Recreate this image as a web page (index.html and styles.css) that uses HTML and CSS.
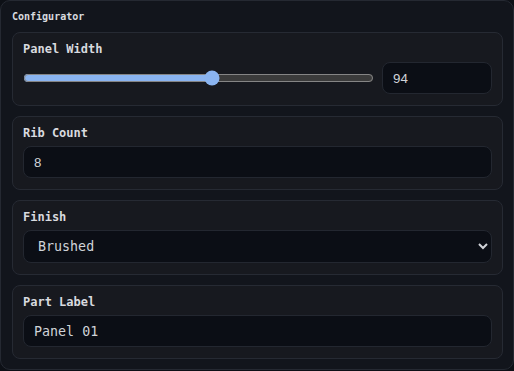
FILE: index.html
```html
<!DOCTYPE html>
<html lang="en">
<head>
<meta charset="utf-8">
<title>Configurator</title>
<link rel="stylesheet" href="styles.css">
</head>
<body>
<div class="panel">
  <div class="title">Configurator</div>
  <div class="card">
    <label class="label" for="w">Panel Width</label>
    <div class="row">
      <input id="w" class="range" type="range" min="40" max="140" value="94">
      <input class="field num small" type="number" value="94">
    </div>
  </div>
  <div class="card">
    <label class="label" for="r">Rib Count</label>
    <input id="r" class="field num" type="number" value="8">
  </div>
  <div class="card">
    <label class="label" for="f">Finish</label>
    <select id="f" class="field sel">
      <option>Brushed</option>
      <option>Polished</option>
      <option>Matte</option>
    </select>
  </div>
  <div class="card">
    <label class="label" for="p">Part Label</label>
    <input id="p" class="field" type="text" value="Panel 01">
  </div>
</div>
</body>
</html>
```
FILE: styles.css
```css
html, body {
  margin: 0;
  padding: 0;
  background: #0d1016;
  color-scheme: dark;
}
body {
  font-family: "DejaVu Sans Mono", monospace;
  color: #d6d8dc;
}
.panel {
  box-sizing: border-box;
  width: 514px;
  background: #12151c;
  border: 1px solid #252932;
  border-radius: 10px;
  padding: 10px 10px 10px 11px;
  display: flex;
  flex-direction: column;
  gap: 10px;
}
.title {
  font-size: 10px;
  font-weight: bold;
  line-height: 11px;
  color: #d8dadf;
}
.card {
  background: #17191f;
  border: 1px solid #262a33;
  border-radius: 8px;
  padding: 10px 10px 11px;
  display: flex;
  flex-direction: column;
  gap: 6px;
}
.label {
  font-size: 12px;
  font-weight: bold;
  line-height: 13px;
  color: #d8dadf;
}
.row {
  display: flex;
  align-items: center;
  gap: 8px;
}
.range {
  flex: 1;
  margin: 0;
  accent-color: #8ab4f0;
  height: 16px;
}
.field {
  box-sizing: border-box;
  height: 32px;
  background: #0b0e15;
  border: 1px solid #232730;
  border-radius: 8px;
  color: #d0d3d8;
  font-family: "DejaVu Sans Mono", monospace;
  font-size: 13.33px;
  padding: 0 10px;
  outline: none;
  width: 100%;
}
.num {
  font-family: "Liberation Sans", Arial, sans-serif;
}
.num::-webkit-inner-spin-button {
  -webkit-appearance: none;
}
.small {
  width: 110px;
  flex: none;
}
.sel {
  height: 33px;
  padding: 0 6px 0 10px;
}
```
